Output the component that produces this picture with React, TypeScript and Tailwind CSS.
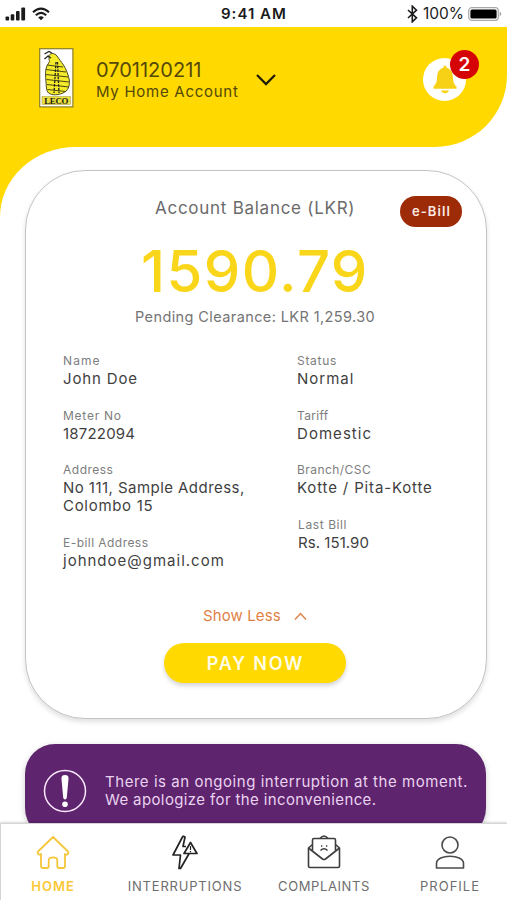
import type { ReactNode } from 'react';
import { clsx } from 'clsx';

type FieldProps = { label: string; children: ReactNode; labelClass?: string; valueClass?: string };

function Field({ label, children, labelClass, valueClass }: FieldProps) {
  return (
    <div className="mb-[18.5px] leading-[18px]">
      <div className={clsx('text-[12px] text-[#7d7d7d]', labelClass)}>{label}</div>
      <div className={clsx('text-[15px] text-[#3f3f3f] whitespace-nowrap', valueClass)}>{children}</div>
    </div>
  );
}

function StatusBar() {
  return (
    <div className="relative h-[27px] shrink-0 bg-white flex items-center justify-between pl-[5px] pr-[5px] text-[#1b1b1b]">
      <div className="flex items-center gap-[6px]">
        <svg width="21" height="14" viewBox="0 0 21 14" fill="currentColor">
          <rect x="0.5" y="9.5" width="3.6" height="4" rx="1" />
          <rect x="5.7" y="7.2" width="3.6" height="6.3" rx="1" />
          <rect x="11" y="4" width="3.6" height="9.5" rx="1" />
          <rect x="16.3" y="0.5" width="3.8" height="13" rx="1" />
        </svg>
        <svg width="18" height="14" viewBox="0 0 18 14" fill="none" stroke="currentColor" strokeWidth="2.1">
          <path d="M1 5.2Q9-2 17 5.2" />
          <path d="M3.8 8.2Q9 3.6 14.2 8.2" />
          <path d="M9 13.2L6.2 10.4Q9 8.2 11.8 10.4Z" fill="currentColor" stroke="none" />
        </svg>
      </div>
      <div className="absolute left-[221px] top-[4px] leading-5 text-[15px] font-semibold tracking-[1px]">9:41 AM</div>
      <div className="flex items-center">
        <svg width="11" height="18" viewBox="0 0 11 18" fill="none" stroke="currentColor" strokeWidth="1.6" className="mr-[5px]">
          <path d="M1 5L9.5 12.8L5.3 16.8V1.2L9.5 5.2L1 13" />
        </svg>
        <span className="text-[15.5px] leading-5 tracking-[0px] mr-[4px] mt-px">100%</span>
        <svg width="34" height="14" viewBox="0 0 34 14">
          <rect x="0.7" y="0.7" width="29.6" height="12.6" rx="3" fill="none" stroke="#a9a9a9" strokeWidth="1.2" />
          <rect x="2.4" y="2.4" width="26.2" height="9.2" rx="1.6" fill="#000" />
          <path d="M31.6 4.6C33.8 5.4 33.8 8.6 31.6 9.4Z" fill="#a9a9a9" />
        </svg>
      </div>
    </div>
  );
}

function LecoLogo() {
  return (
    <svg width="35" height="60" viewBox="0 0 35 60">
      <rect x="0.7" y="0.7" width="33.2" height="58.2" fill="#fff" stroke="#8c7f28" strokeWidth="1.2" />
      <path
        d="M10 7.5C12 4.5 15.5 5 18 8C20 11 22 13.5 24.5 17C27 21 29.5 27 30.3 32C31 38 29 43 24 45C19 47.3 13 47.5 9.5 45C6.8 42.5 7.5 38 7 34C6.5 28 6 23 7.5 19C8.5 16 11.5 14 10 11.5Z"
        fill="#f4ec2a"
        stroke="#3c3a16"
        strokeWidth="0.9"
      />
      <path
        d="M8 17L24 19M7 21.5L27 24M7 26.5L29 29M7.5 31.5L30 34M8 36.5L30 39M8.5 41.5L27 43.5"
        stroke="#4c4913"
        strokeWidth="1.1"
      />
      <path d="M17 14L15 45M18.5 14L20 45" stroke="#222" strokeWidth="1.3" strokeDasharray="2.5 1.2" />
      <path d="M5.5 6L10 3.5L13 5M5.5 11L9 8L12 10" fill="none" stroke="#222" strokeWidth="1.2" />
      <rect x="3" y="48.5" width="28.5" height="8" fill="#e9df43" stroke="#a09730" strokeWidth="0.5" />
      <text x="17.3" y="55.7" textAnchor="middle" textLength="24" fontSize="8.8" fontWeight="700" fontFamily="Liberation Serif, serif" fill="#1d1b08">
        LECO
      </text>
    </svg>
  );
}

function Header() {
  return (
    <header className="h-[120px] shrink-0 bg-[#ffd900] rounded-br-[72px] pl-[39px] pr-[41px] pt-[21px] flex items-start">
      <LecoLogo />
      <div className="ml-[22px] mt-[11px] text-[#54480a]">
        <div className="text-[20px] leading-[23px] tracking-[0px]">0701120211</div>
        <div className="text-[15px] leading-[20px] tracking-[0.73px] whitespace-nowrap">My Home Account</div>
      </div>
      <svg width="20" height="14" viewBox="0 0 20 14" fill="none" stroke="#211d08" strokeWidth="2.3" className="ml-[17px] mt-[25px]">
        <path d="M1 2L10 11L19 2" />
      </svg>
      <div className="relative ml-auto mt-[10px] w-[43px] h-[43px] rounded-full bg-white flex justify-center">
        <svg width="26" height="30" viewBox="0 0 26 30" fill="#f7d116" className="mt-[7px]">
          <path d="M13 0.5C14.2 0.5 14.6 1.5 14.6 2.8C18.8 3.8 20.7 7.5 20.9 12C21.1 17 22 19.2 24.5 21.5V23.8H1.5V21.5C4 19.2 4.9 17 5.1 12C5.3 7.5 7.2 3.8 11.4 2.8C11.4 1.5 11.8 0.5 13 0.5Z" />
          <path d="M9 25.5H17C16 29 10 29 9 25.5Z" />
        </svg>
        <div className="absolute -top-[8px] left-[27px] w-[29px] h-[29px] pt-[2px] rounded-full bg-[#d60505] text-white text-[19px] font-semibold flex items-center justify-center">2</div>
      </div>
    </header>
  );
}

function BalanceCard() {
  return (
    <section className="relative ml-[25px] w-[462px] h-[549px] rounded-[60px] bg-white border border-[#c4c4c4] shadow-[0_3px_5px_rgba(0,0,0,0.12)] pt-[25px]">
      <div className="absolute top-[25px] right-[24px] w-[62px] h-[31px] rounded-full bg-[#9e2b08] text-[#fbe9e4] text-[13px] font-semibold tracking-[1.1px] pl-px flex items-center justify-center">
        e-Bill
      </div>
      <div className="pl-[129px] text-[17px] leading-[24px] tracking-[0.73px] text-[#6b6b6b]">Account Balance (LKR)</div>
      <div className="pl-[115px] mt-[12px] text-[58px] leading-[78px] font-medium tracking-[1.4px] text-[#fad61b]">1590.79</div>
      <div className="pl-[109px] -mt-[3px] text-[14.5px] leading-[20px] tracking-[0.4px] text-[#747474]">Pending Clearance: LKR 1,259.30</div>

      <div className="mt-[25px] ml-[37px] h-[246px] flex">
        <div className="w-[234px]">
          <Field label="Name" labelClass="tracking-[1.1px]" valueClass="tracking-[0.85px]">John Doe</Field>
          <Field label="Meter No" labelClass="tracking-[0.75px]" valueClass="tracking-[0.2px]">18722094</Field>
          <Field label="Address" labelClass="tracking-[0.5px]" valueClass="tracking-[0.45px]">
            No 111, Sample Address,
            <br />
            <span className="tracking-[0.7px]">Colombo 15</span>
          </Field>
          <Field label="E-bill Address" labelClass="tracking-[0.45px]" valueClass="tracking-[1px]">johndoe@gmail.com</Field>
        </div>
        <div>
          <Field label="Status" labelClass="tracking-[0.7px]" valueClass="tracking-[1px]">Normal</Field>
          <Field label="Tariff" labelClass="tracking-[0.3px]" valueClass="tracking-[1.05px]">Domestic</Field>
          <Field label="Branch/CSC" labelClass="tracking-[0.45px]" valueClass="tracking-[0.85px]">Kotte / Pita-Kotte</Field>
          <div className="ml-px">
            <Field label="Last Bill" labelClass="tracking-[0.6px]" valueClass="tracking-[0.05px]">Rs. 151.90</Field>
          </div>
        </div>
      </div>

      <button className="ml-[177px] mt-[8px] flex items-center text-[15px] leading-[20px] tracking-[0.1px] text-[#df8145]">
        Show Less
        <svg width="13" height="9" viewBox="0 0 13 9" fill="none" stroke="currentColor" strokeWidth="1.4" className="ml-[13px]">
          <path d="M1 7.5L6.5 1.5L12 7.5" />
        </svg>
      </button>
      <button className="ml-[138px] mt-[17px] w-[182px] h-[40px] rounded-full bg-[#ffd900] shadow-[0_3px_4px_rgba(0,0,0,0.16)] text-[#fffce6] text-[18px] font-semibold tracking-[1.8px] pl-px flex items-center justify-center">
        PAY NOW
      </button>
    </section>
  );
}

function InterruptionBanner() {
  return (
    <section className="ml-[25px] mt-[25px] w-[461px] h-[94px] rounded-[30px] bg-[#5e246e] shadow-[0_2px_6px_rgba(0,0,0,0.2)] flex items-center">
      <svg width="44" height="44" viewBox="0 0 44 44" className="ml-[18px] shrink-0">
        <circle cx="22" cy="22" r="20.5" fill="none" stroke="#fbe9ff" strokeWidth="1.5" />
        <path d="M22 6C24.7 6 25.8 7.5 25.5 10L23.8 28.5C23.5 31 20.5 31 20.2 28.5L18.5 10C18.2 7.5 19.3 6 22 6Z" fill="#fff" />
        <circle cx="22" cy="35.3" r="2.8" fill="#fff" />
      </svg>
      <div className="ml-[18px] text-[15px] leading-[18px] text-[#ead3f0] whitespace-nowrap">
        <div className="tracking-[0.54px]">There is an ongoing interruption at the moment.</div>
        <div className="tracking-[0.38px]">We apologize for the inconvenience.</div>
      </div>
    </section>
  );
}

function NavItem({ label, className, labelClass, children }: { label: string; className: string; labelClass: string; children: ReactNode }) {
  return (
    <button className={clsx('flex flex-col items-center pt-[10px]', className)}>
      {children}
      <span className={clsx('mt-[7px] text-[13px] leading-[18px]', labelClass)}>{label}</span>
    </button>
  );
}

function BottomNav() {
  return (
    <nav className="relative h-[77px] shrink-0 bg-white border-t border-l border-[#d5d5d5] shadow-[0_-1px_2px_rgba(0,0,0,0.15)] flex items-start">
      <NavItem label="HOME" className="w-[104px] mr-[10px]" labelClass="font-semibold text-[#fac935] tracking-[1px]">
        <svg width="36" height="36" viewBox="0 0 36 36" fill="none" stroke="#f5c63a" strokeWidth="1.8" strokeLinejoin="round" className="mr-px">
          <path d="M18 3L33 17.5C34.3 19 32.5 21 31 20.5L30 20V32C30 33.5 29.3 34 28 34H24C22.7 34 22.3 33.3 22.3 32V26C22.3 22.5 13.7 22.5 13.7 26V32C13.7 33.3 13.3 34 12 34H8C6.7 34 6 33.5 6 32V20L5 20.5C3.5 21 1.7 19 3 17.5Z" />
        </svg>
      </NavItem>
      <NavItem label="INTERRUPTIONS" className="w-[140px]" labelClass="text-[#6e6e6e] tracking-[0.8px]">
        <svg width="36" height="36" viewBox="0 0 36 36" fill="none" stroke="#222" strokeWidth="1.7" strokeLinejoin="round" className="mr-[3px]">
          <path d="M17 2L7 21H14.5L13 34.5H14.5L23 19.8M17 2L19 3L17 12.5H20" />
          <path d="M24.5 8.5L31 19.5H18Z" />
          <path d="M24.5 12V16M24.5 17V18.3" strokeWidth="1.2" />
        </svg>
      </NavItem>
      <NavItem label="COMPLAINTS" className="w-[138px]" labelClass="text-[#6e6e6e] tracking-[0.6px]">
        <svg width="36" height="36" viewBox="0 0 36 36" fill="none" stroke="#3d3d3d" strokeWidth="1.6" strokeLinejoin="round">
          <path d="M6.5 10.5L2.5 14V32Q2.5 33.5 4 33.5H32Q33.5 33.5 33.5 32V14L29.5 10.5" />
          <path d="M2.5 14L16.5 25Q18 26 19.5 25L33.5 14" />
          <path d="M6.5 16.5V6Q6.5 4.500 8 4.500H28Q29.5 4.500 29.5 6V16.5" />
          <path d="M14 4.5Q18-0.500 22 4.500" />
          <path d="M14.5 16.5Q18 13 21.5 16.5M15 12H16.3M20 12H21.3" />
        </svg>
      </NavItem>
      <NavItem label="PROFILE" className="w-[114px]" labelClass="text-[#6e6e6e] tracking-[1px]">
        <svg width="36" height="36" viewBox="0 0 36 36" fill="none" stroke="#4b4b4b" strokeWidth="1.6" strokeLinejoin="round">
          <circle cx="18" cy="11" r="8" />
          <path d="M4.5 34V29.5C4.5 19.8 31.5 19.8 31.5 29.5V34Z" />
        </svg>
      </NavItem>
    </nav>
  );
}

export default function App() {
  return (
    <div className="relative w-[507px] h-[900px] overflow-hidden bg-white flex flex-col font-[Inter,sans-serif]">
      <StatusBar />
      <Header />
      <main className="flex-1 min-h-0 overflow-hidden bg-[linear-gradient(to_right,#ffd900_80px,#fff_80px)]">
        <div className="h-full rounded-tl-[76px_70px] bg-white pt-[23px]">
          <BalanceCard />
          <InterruptionBanner />
        </div>
      </main>
      <BottomNav />
    </div>
  );
}
